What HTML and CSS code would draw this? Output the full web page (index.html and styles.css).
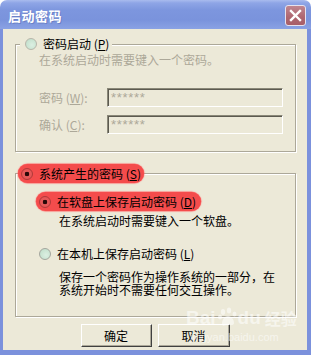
FILE: index.html
```html
<!DOCTYPE html>
<html lang="zh-CN">
<head>
<meta charset="utf-8">
<title>启动密码</title>
<link rel="stylesheet" href="styles.css">
</head>
<body>
<div class="window">
  <div class="titlebar">
    <span class="title">启动密码</span>
    <span class="close"><svg width="13" height="13" viewBox="0 0 13 13"><path d="M2 2 L11 11 M11 2 L2 11" stroke="#fff" stroke-width="2.4" stroke-linecap="square"/></svg></span>
  </div>
  <div class="client">
    <div class="group g1">
      <div class="legend l1"><span class="radio off"></span><span>密码启动 (<u>P</u>)</span></div>
      <div class="desc gray d0">在系统启动时需要键入一个密码。</div>
      <div class="field f1"><span class="flabel gray">密码 (<u>W</u>):</span><span class="edit">******</span></div>
      <div class="field f2"><span class="flabel gray">确认 (<u>C</u>):</span><span class="edit">******</span></div>
    </div>
    <div class="group g2">
      <div class="legend l2 hl"><span class="radio hlr"></span><span>系统产生的密码 (<u>S</u>)</span></div>
      <div class="opt o1 hl"><span class="radio hlr"></span><span>在软盘上保存启动密码 (<u>D</u>)</span></div>
      <div class="desc d1">在系统启动时需要键入一个软盘。</div>
      <div class="opt o2"><span class="radio"></span><span>在本机上保存启动密码 (<u>L</u>)</span></div>
      <div class="desc d2">保存一个密码作为操作系统的一部分，在<br>系统开始时不需要任何交互操作。</div>
    </div>
    <div class="buttons">
      <button class="btn b1">确定</button>
      <button class="btn b2">取消</button>
    </div>
  </div>
  <div class="watermark">
    <div class="wm-top"><span class="wm-bai">Bai</span><svg class="paw" width="22" height="20" viewBox="0 0 22 20"><ellipse cx="6" cy="5" rx="2.2" ry="3" fill="#fff"/><ellipse cx="12" cy="3.5" rx="2.2" ry="3" fill="#fff"/><ellipse cx="17.5" cy="7" rx="2" ry="2.6" fill="#fff"/><ellipse cx="3" cy="10" rx="2" ry="2.6" fill="#fff"/><path d="M5 17 C5 12 8 9 11 9 C14 9 17 12 17 16 C17 19 13 18 11 18 C8 18 5 20 5 17 Z" fill="#fff"/></svg><span class="wm-du">du</span><span class="wm-jy">经验</span></div>
    <div class="wm-url">jingyan.baidu.com</div>
  </div>
</div>
</body>
</html>
```

FILE: styles.css
```css
* { box-sizing: border-box; }
html, body { margin: 0; padding: 0; }
body {
  width: 311px;
  height: 355px;
  overflow: hidden;
  font-family: "Noto Sans CJK SC", "Liberation Sans", sans-serif;
  font-size: 12px;
  color: #000;
  background: #fff;
}
.window {
  position: relative;
  width: 311px;
  height: 355px;
}
.titlebar {
  height: 29px;
  border-radius: 7px 7px 0 0;
  background: linear-gradient(to bottom, #a9bbee 0px, #8ea5e6 3px, #7d96de 10px, #7a93dc 20px, #8aa2e4 29px);
  display: flex;
  align-items: center;
  justify-content: space-between;
  padding: 0 5px 0 8px;
}
.title {
  color: #fff;
  font-weight: bold;
  font-size: 13px;
  line-height: 15px;
  letter-spacing: 0.5px;
  text-shadow: 1px 1px 0 #6c82c8;
  margin-top: 1px;
}
.close {
  width: 21px;
  height: 21px;
  margin-top: 2px;
  border: 1px solid #e6e2ee;
  border-radius: 3px;
  background: linear-gradient(to bottom, #c08690, #ae6670 60%, #a85e68);
  display: flex;
  align-items: center;
  justify-content: center;
}
.client {
  height: 326px;
  background: #ece9d8;
  border-left: 3px solid #7b91dc;
  border-right: 4px solid #7b91dc;
  border-bottom: 5px solid #7b91dc;
  padding-top: 15px;
}
.gray { color: #aca899; }
.group {
  margin-left: 12px;
  width: 281px;
  border: 1px solid #aca899;
  box-shadow: inset 1px 1px 0 #fff, 1px 1px 0 #fff;
}
.g1 {
  padding: 0 0 17px 0;
}
.legend {
  display: flex;
  align-items: center;
  width: max-content;
  background: #ece9d8;
}
.l1 {
  height: 14px;
  margin-top: -8px;
  margin-left: 4px;
  padding: 0 3px 0 5px;
  line-height: 14px;
}
.radio {
  width: 12px;
  height: 12px;
  border-radius: 50%;
  border: 1px solid #a4a69e;
  background: radial-gradient(circle at 60% 60%, #dcefe2 0%, #c9e4d2 60%, #b9d6c4 100%);
  margin-right: 6px;
  flex: none;
  position: relative;
}
.radio.off {
  border-color: #b8b6aa;
}
.radio.hlr {
  border-color: #b03a3a;
  background: radial-gradient(circle, #2a0808 0, #2a0808 2px, #e85a5a 2.6px, #e05050 100%);
}
.desc { line-height: 13px; }
.d0 { margin: 2px 0 0 23px; }
.field {
  display: flex;
  align-items: center;
  margin-left: 23px;
  height: 19px;
}
.f1 { margin-top: 22px; }
.f2 { margin-top: 8px; }
.flabel { width: 68px; line-height: 19px; }
.edit {
  width: 176px;
  height: 19px;
  border: 1px solid;
  border-color: #8a8878 #fff #fff #8a8878;
  box-shadow: inset 1px 1px 0 #5c5a50;
  background: #ece9d8;
  color: #aca899;
  font-family: "Liberation Sans", sans-serif;
  font-size: 13px;
  line-height: 18px;
  letter-spacing: 0.7px;
  padding-left: 3px;
}
.g2 {
  margin-top: 21px;
  padding: 0 0 20px 0;
}
.hl {
  background: #f44c4c;
  border-radius: 10px;
  box-shadow: 0 0 1px 0.5px #f66;
}
.l2 {
  height: 19px;
  margin-top: -10px;
  margin-left: 2px;
  padding: 0 3px 0 3px;
  line-height: 19px;
}
.opt {
  display: flex;
  align-items: center;
  height: 19px;
  line-height: 19px;
  width: max-content;
}
.o1 {
  margin: 9px 0 0 20px;
  padding: 0 5px 0 3px;
}
.d1 { margin: 3px 0 0 43px; }
.o2 { margin: 17px 0 0 23px; }
.d2 { margin: 7px 0 0 43px; }
.buttons {
  display: flex;
  justify-content: center;
  gap: 6px;
  margin-top: 7px;
}
.btn {
  height: 23px;
  padding: 0;
  font-family: "Noto Sans CJK SC", "Liberation Sans", sans-serif;
  font-size: 12px;
  line-height: 20px;
  color: #000;
  background: #ece9d8;
  border: 1px solid;
  border-color: #fff #404040 #404040 #fff;
  box-shadow: inset -1px -1px 0 #aca899;
}
.b1 { width: 71px; }
.b2 { width: 72px; }
.watermark {
  position: absolute;
  left: 186px;
  top: 306px;
  color: #fff;
  opacity: 0.55;
  pointer-events: none;
}
.wm-top {
  display: flex;
  align-items: flex-end;
  height: 22px;
}
.wm-bai, .wm-du {
  font-family: "Liberation Sans", sans-serif;
  font-weight: bold;
  font-size: 19px;
  line-height: 20px;
}
.paw { margin: 0 -1px 1px 1px; }
.wm-jy {
  font-weight: bold;
  font-size: 16px;
  line-height: 20px;
  margin-left: 4px;
}
.wm-url {
  font-family: "Liberation Sans", sans-serif;
  font-size: 11px;
  line-height: 13px;
  margin-top: 3px;
  margin-left: 4px;
}
```
